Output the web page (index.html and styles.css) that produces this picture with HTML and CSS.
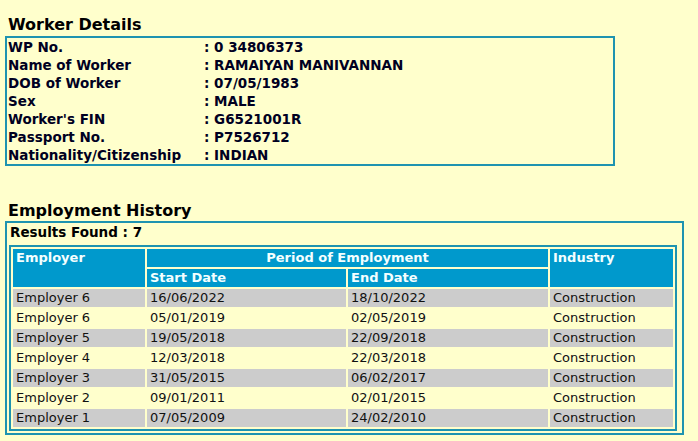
FILE: index.html
```html
<!DOCTYPE html>
<html>
<head>
<meta charset="utf-8">
<link rel="stylesheet" href="styles.css">
</head>
<body>
<div class="page">
  <h2 class="title">Worker Details</h2>
  <div class="box worker">
    <div class="row"><span class="lbl">WP No.</span><span class="val">: 0 34806373</span></div>
    <div class="row"><span class="lbl">Name of Worker</span><span class="val">: RAMAIYAN MANIVANNAN</span></div>
    <div class="row"><span class="lbl">DOB of Worker</span><span class="val">: 07/05/1983</span></div>
    <div class="row"><span class="lbl">Sex</span><span class="val">: MALE</span></div>
    <div class="row"><span class="lbl">Worker's FIN</span><span class="val">: G6521001R</span></div>
    <div class="row"><span class="lbl">Passport No.</span><span class="val">: P7526712</span></div>
    <div class="row"><span class="lbl">Nationality/Citizenship</span><span class="val">: INDIAN</span></div>
  </div>

  <h2 class="title title2">Employment History</h2>
  <div class="box history">
    <div class="results">Results Found : 7</div>
    <table class="emp">
      <colgroup>
        <col class="c-emp"><col class="c-start"><col class="c-end"><col class="c-ind">
      </colgroup>
      <thead>
        <tr>
          <th rowspan="2">Employer</th>
          <th colspan="2" class="center">Period of Employment</th>
          <th rowspan="2">Industry</th>
        </tr>
        <tr>
          <th>Start Date</th>
          <th>End Date</th>
        </tr>
      </thead>
      <tbody>
        <tr class="odd"><td>Employer 6</td><td>16/06/2022</td><td>18/10/2022</td><td>Construction</td></tr>
        <tr><td>Employer 6</td><td>05/01/2019</td><td>02/05/2019</td><td>Construction</td></tr>
        <tr class="odd"><td>Employer 5</td><td>19/05/2018</td><td>22/09/2018</td><td>Construction</td></tr>
        <tr><td>Employer 4</td><td>12/03/2018</td><td>22/03/2018</td><td>Construction</td></tr>
        <tr class="odd"><td>Employer 3</td><td>31/05/2015</td><td>06/02/2017</td><td>Construction</td></tr>
        <tr><td>Employer 2</td><td>09/01/2011</td><td>02/01/2015</td><td>Construction</td></tr>
        <tr class="odd"><td>Employer 1</td><td>07/05/2009</td><td>24/02/2010</td><td>Construction</td></tr>
      </tbody>
    </table>
  </div>
</div>
</body>
</html>
```

FILE: styles.css
```css
html, body {
  margin: 0;
  padding: 0;
  background: #FFFFCC;
}
body {
  font-family: "DejaVu Sans", Verdana, sans-serif;
  color: #000;
}
.page {
  padding: 15px 0 0 5px;
}
.title {
  margin: 0 0 2px 3px;
  font-size: 16px;
  line-height: 19px;
  font-weight: bold;
  color: #000;
}
.title2 {
  margin-top: 35px;
  margin-bottom: 1px;
}
.box {
  border: 2px solid #1E93B0;
}
.worker {
  width: 605px;
  padding: 0 0 0 1px;
}
.row {
  display: flex;
  font-size: 13.5px;
  line-height: 18px;
  font-weight: bold;
  color: #000022;
}
.lbl {
  width: 196px;
}
.history {
  width: 668px;
  padding: 0 5px 2px 2px;
}
.results {
  font-size: 13.5px;
  line-height: 19px;
  font-weight: bold;
  padding-left: 1px;
  margin-bottom: 3px;
}
.emp {
  border: 2px solid #1E93B0;
  border-spacing: 2px;
  width: 668px;
  table-layout: fixed;
  font-size: 13px;
}
.c-emp { width: 132px; }
.c-start { width: 199px; }
.c-end { width: 200px; }
.c-ind { width: 123px; }
.emp th {
  background: #0099CC;
  color: #F4FFFF;
  text-align: left;
  font-weight: bold;
  line-height: 18px;
  height: 18px;
  padding: 0 3px;
  vertical-align: top;
}
.emp th.center {
  text-align: center;
}
.emp td {
  line-height: 18px;
  height: 18px;
  padding: 0 3px;
  color: #111;
}
.emp tr.odd td {
  background: #CCCCCC;
}
```
